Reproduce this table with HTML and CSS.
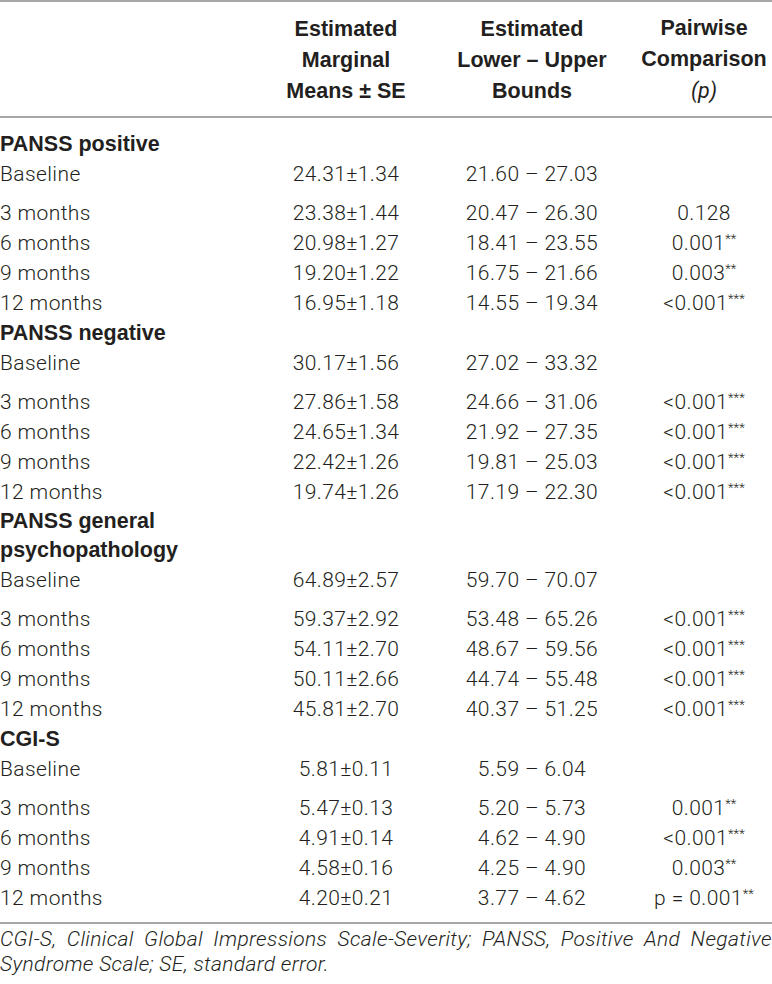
FILE: index.html
```html
<!DOCTYPE html>
<html>
<head>
    <title>
        Estimated marginal means
    </title>
    <link rel="stylesheet" href="styles.css">
</head>

<body>
    <div class="table-wrap">
        <table class="means-table">
            <colgroup>
                <col class="col-label">
                <col class="col-means">
                <col class="col-bounds">
                <col class="col-p">
            </colgroup>
            <thead>
                <tr>
                    <th></th>
                    <th>Estimated<br>Marginal<br>Means ± SE</th>
                    <th>Estimated<br>Lower – Upper<br>Bounds</th>
                    <th>Pairwise<br>Comparison<br><i>(p)</i></th>
                </tr>
            </thead>
            <tbody>
                <!-- PANSS positive -->
                <tr class="group first">
                    <td colspan="4">PANSS positive</td>
                </tr>
                <tr class="baseline">
                    <td>Baseline</td><td>24.31±1.34</td><td>21.60 – 27.03</td><td></td>
                </tr>
                <tr>
                    <td>3 months</td><td>23.38±1.44</td><td>20.47 – 26.30</td><td>0.128</td>
                </tr>
                <tr>
                    <td>6 months</td><td>20.98±1.27</td><td>18.41 – 23.55</td><td>0.001<sup>**</sup></td>
                </tr>
                <tr>
                    <td>9 months</td><td>19.20±1.22</td><td>16.75 – 21.66</td><td>0.003<sup>**</sup></td>
                </tr>
                <tr>
                    <td>12 months</td><td>16.95±1.18</td><td>14.55 – 19.34</td><td>&lt;0.001<sup>***</sup></td>
                </tr>

                <!-- PANSS negative -->
                <tr class="group">
                    <td colspan="4">PANSS negative</td>
                </tr>
                <tr class="baseline">
                    <td>Baseline</td><td>30.17±1.56</td><td>27.02 – 33.32</td><td></td>
                </tr>
                <tr>
                    <td>3 months</td><td>27.86±1.58</td><td>24.66 – 31.06</td><td>&lt;0.001<sup>***</sup></td>
                </tr>
                <tr>
                    <td>6 months</td><td>24.65±1.34</td><td>21.92 – 27.35</td><td>&lt;0.001<sup>***</sup></td>
                </tr>
                <tr>
                    <td>9 months</td><td>22.42±1.26</td><td>19.81 – 25.03</td><td>&lt;0.001<sup>***</sup></td>
                </tr>
                <tr>
                    <td>12 months</td><td>19.74±1.26</td><td>17.19 – 22.30</td><td>&lt;0.001<sup>***</sup></td>
                </tr>

                <!-- PANSS general psychopathology -->
                <tr class="group two-line">
                    <td>PANSS general<br>psychopathology</td><td></td><td></td><td></td>
                </tr>
                <tr class="baseline">
                    <td>Baseline</td><td>64.89±2.57</td><td>59.70 – 70.07</td><td></td>
                </tr>
                <tr>
                    <td>3 months</td><td>59.37±2.92</td><td>53.48 – 65.26</td><td>&lt;0.001<sup>***</sup></td>
                </tr>
                <tr>
                    <td>6 months</td><td>54.11±2.70</td><td>48.67 – 59.56</td><td>&lt;0.001<sup>***</sup></td>
                </tr>
                <tr>
                    <td>9 months</td><td>50.11±2.66</td><td>44.74 – 55.48</td><td>&lt;0.001<sup>***</sup></td>
                </tr>
                <tr>
                    <td>12 months</td><td>45.81±2.70</td><td>40.37 – 51.25</td><td>&lt;0.001<sup>***</sup></td>
                </tr>

                <!-- CGI-S -->
                <tr class="group">
                    <td colspan="4">CGI-S</td>
                </tr>
                <tr class="baseline">
                    <td>Baseline</td><td>5.81±0.11</td><td>5.59 – 6.04</td><td></td>
                </tr>
                <tr>
                    <td>3 months</td><td>5.47±0.13</td><td>5.20 – 5.73</td><td>0.001<sup>**</sup></td>
                </tr>
                <tr>
                    <td>6 months</td><td>4.91±0.14</td><td>4.62 – 4.90</td><td>&lt;0.001<sup>***</sup></td>
                </tr>
                <tr>
                    <td>9 months</td><td>4.58±0.16</td><td>4.25 – 4.90</td><td>0.003<sup>**</sup></td>
                </tr>
                <tr class="last">
                    <td>12 months</td><td>4.20±0.21</td><td>3.77 – 4.62</td><td>p = 0.001<sup>**</sup></td>
                </tr>
            </tbody>
        </table>

        <p class="table-note">CGI-S, Clinical Global Impressions Scale-Severity; PANSS, Positive And Negative Syndrome Scale; SE, standard error.</p>
    </div>
</body>

</html>
```

FILE: styles.css
```css
body{
    margin: 0;
    padding: 0;
    background: #ffffff;
    color: #231f20;
    font-family: Roboto, "Liberation Sans", Arial, sans-serif;
}
.table-wrap{
    width: 772px;
}
.means-table{
    width: 772px;
    border-collapse: collapse;
    table-layout: fixed;
}
.col-label{
    width: 264px;
}
.col-means{
    width: 164px;
}
.col-bounds{
    width: 208px;
}
.col-p{
    width: 136px;
}
.means-table th{
    font-family: "Liberation Sans", Arial, sans-serif;
    font-size: 21.5px;
    font-weight: 700;
    line-height: 31px;
    text-align: center;
    padding: 11px 0 9px 0;
    border-top: 2px solid #a7a7a7;
    border-bottom: 2px solid #a7a7a7;
    white-space: nowrap;
}
.means-table th i{
    font-family: Roboto, "Liberation Sans", sans-serif;
    font-weight: 400;
}
.means-table td{
    font-size: 21px;
    font-weight: 300;
    letter-spacing: 0.4px;
    line-height: 30px;
    padding: 0;
    text-align: center;
    white-space: nowrap;
}
.means-table td:first-child{
    text-align: left;
}
.means-table tr.group td{
    font-family: "Liberation Sans", Arial, sans-serif;
    font-size: 21.5px;
    font-weight: 700;
    letter-spacing: 0;
}
.means-table tr.first td{
    padding-top: 11px;
}
.means-table tr.two-line td{
    line-height: 29px;
}
.means-table tr.baseline td{
    padding-bottom: 9px;
}
.means-table tr.last td{
    padding-bottom: 9px;
    border-bottom: 2px solid #a7a7a7;
}
.means-table sup{
    font-size: 13px;
    letter-spacing: 0;
    line-height: 0;
    vertical-align: 7px;
}
.table-note{
    margin: 3px 0 0 0;
    font-size: 21px;
    font-weight: 300;
    font-style: italic;
    letter-spacing: 0.35px;
    line-height: 25px;
    text-align: justify;
}
```
